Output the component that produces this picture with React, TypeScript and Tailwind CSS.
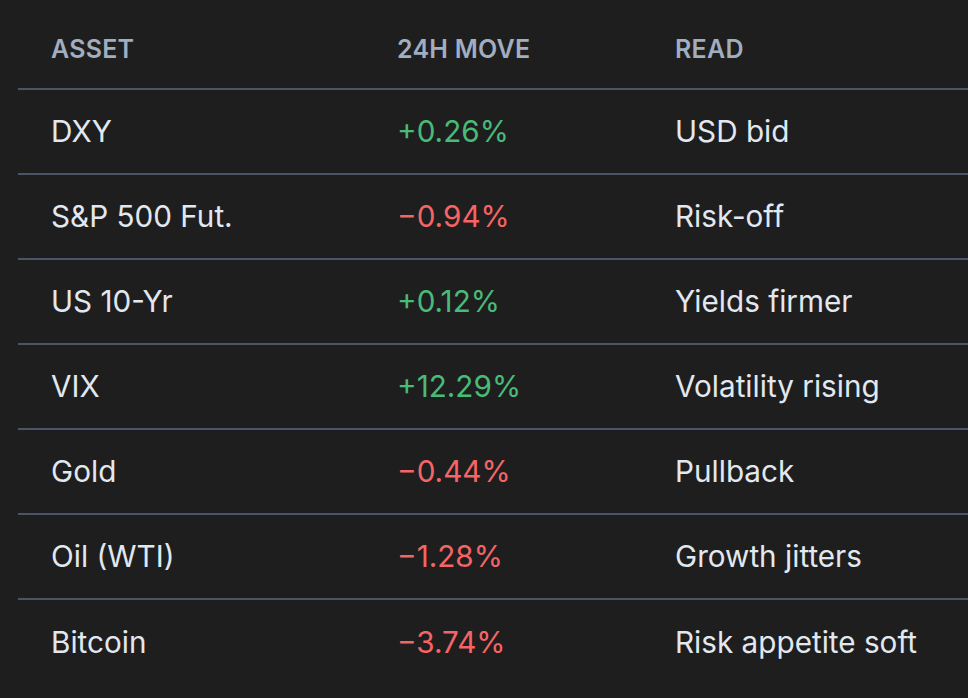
const rows = [
  { asset: "DXY", move: "+0.26%", up: true, read: "USD bid" },
  { asset: "S&P 500 Fut.", move: "\u22120.94%", up: false, read: "Risk-off" },
  { asset: "US 10-Yr", move: "+0.12%", up: true, read: "Yields firmer" },
  { asset: "VIX", move: "+12.29%", up: true, read: "Volatility rising" },
  { asset: "Gold", move: "\u22120.44%", up: false, read: "Pullback" },
  { asset: "Oil (WTI)", move: "\u22121.28%", up: false, read: "Growth jitters" },
  { asset: "Bitcoin", move: "\u22123.74%", up: false, read: "Risk appetite soft" },
];

export default function App() {
  return (
    <div
      className="min-h-screen w-full overflow-hidden bg-[#1e1e1e] pl-[18px]"
      style={{ fontFamily: "Inter, 'Liberation Sans', sans-serif" }}
    >
      <div className="w-[1000px]">
        {/* header */}
        <div className="grid h-[90px] grid-cols-[346px_278px_1fr] items-center border-b-2 border-[#4a5568] pt-[12px] text-[25px] font-semibold uppercase tracking-[0.01em] text-[#a0aec0]">
          <div className="pl-[33px]">Asset</div>
          <div className="pl-[33px]">24h Move</div>
          <div className="pl-[33px]">Read</div>
        </div>

        {rows.map((r, i) => (
          <div
            key={r.asset}
            className={`grid h-[85px] grid-cols-[346px_278px_1fr] items-center text-[29.7px] text-[#e2e8f0] ${
              i < rows.length - 1 ? "border-b-2 border-[#4a5568]" : ""
            }`}
          >
            <div className="pl-[33px]">{r.asset}</div>
            <div className={`pl-[33px] ${r.up ? "text-[#48bb78]" : "text-[#f56565]"}`}>{r.move}</div>
            <div className="pl-[33px]">{r.read}</div>
          </div>
        ))}
      </div>
    </div>
  );
}
